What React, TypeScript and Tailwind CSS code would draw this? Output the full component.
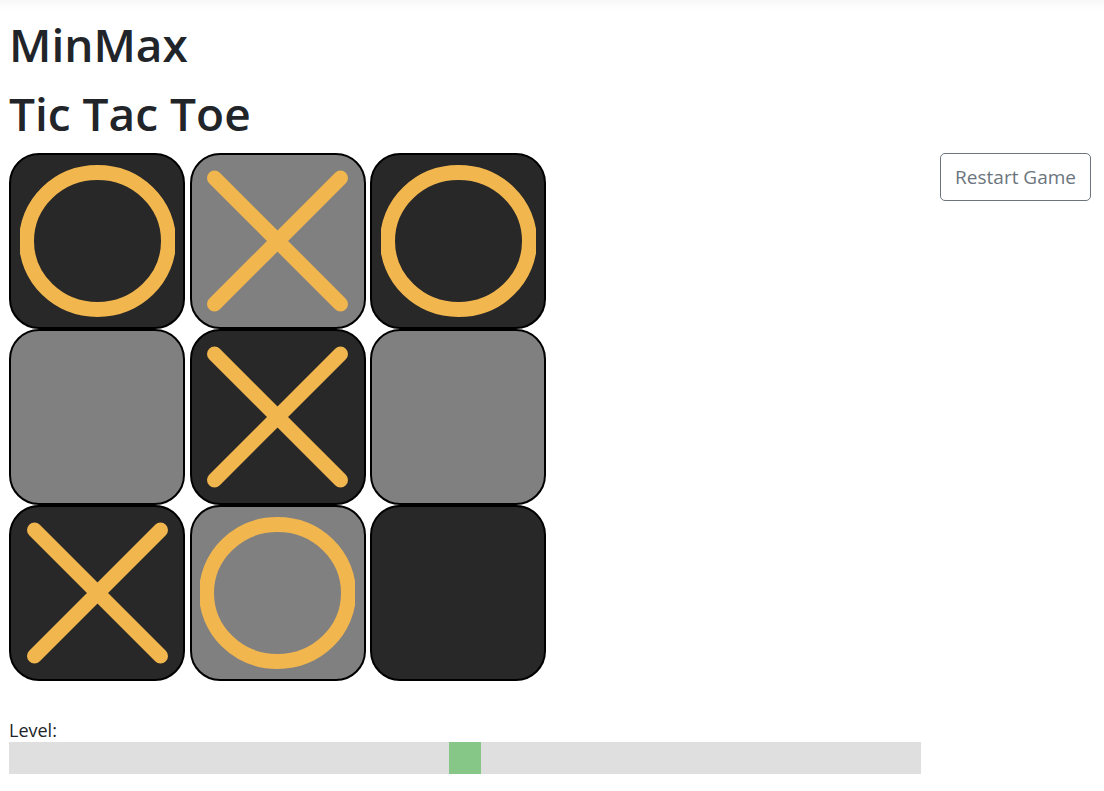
import React from "react";

type Mark = "X" | "O" | "";

const board: Mark[] = ["O", "X", "O", "", "X", "", "X", "O", ""];

function OMark() {
  return (
    <svg width="155" height="160" viewBox="0 0 155 160" className="block">
      <ellipse cx="77.5" cy="80" rx="71" ry="68.5" fill="none" stroke="#f2b64e" strokeWidth="15" />
    </svg>
  );
}

function XMark() {
  return (
    <svg width="155" height="160" viewBox="0 0 155 160" className="block">
      <path d="M14.5 17 L140.5 143 M140.5 17 L14.5 143" stroke="#f2b64e" strokeWidth="15" strokeLinecap="round" />
    </svg>
  );
}

function Cell({ mark, dark }: { mark: Mark; dark: boolean }) {
  return (
    <div
      className={
        "flex h-[176px] w-[176px] items-center justify-center overflow-hidden rounded-[30px] border-2 border-black " +
        (dark ? "bg-[#282828]" : "bg-[#808080]")
      }
    >
      {mark === "O" && <OMark />}
      {mark === "X" && <XMark />}
    </div>
  );
}

export default function App() {
  const level = 0.5;
  return (
    <div
      className="min-h-[791px] bg-white text-[#212529]"
      style={{ fontFamily: '"Open Sans", "Noto Sans", sans-serif' }}
    >
      <div className="h-[10px] bg-gradient-to-b from-[#f7f7f7] to-white" />
      <div className="px-[9px]">
        <h1 className="m-0 text-[46px] font-semibold leading-[69px]">MinMax</h1>
        <h1 className="m-0 text-[46px] font-semibold leading-[69px]">Tic Tac Toe</h1>

        <div className="mt-[5px] flex items-start justify-between pr-[4px]">
          <div className="grid grid-cols-[176px_176px_176px] gap-x-[4.5px]">
            {board.map((m, i) => (
              <Cell key={i} mark={m} dark={(Math.floor(i / 3) + (i % 3)) % 2 === 0} />
            ))}
          </div>
          <button className="h-[48px] rounded-[5px] border border-[#6c757d] bg-white px-[14px] text-[19px] leading-[30px] text-[#6c757d]">
            Restart Game
          </button>
        </div>

        <div className="mt-[37px] text-[18px] leading-[24px]">Level:</div>
        <div className="relative h-[32px] w-[912px] bg-[#dfdfdf]">
          <div
            className="absolute top-0 h-[32px] w-[32px] bg-[#86c787]"
            style={{ left: `${level * (912 - 32)}px` }}
          />
        </div>
      </div>
    </div>
  );
}
